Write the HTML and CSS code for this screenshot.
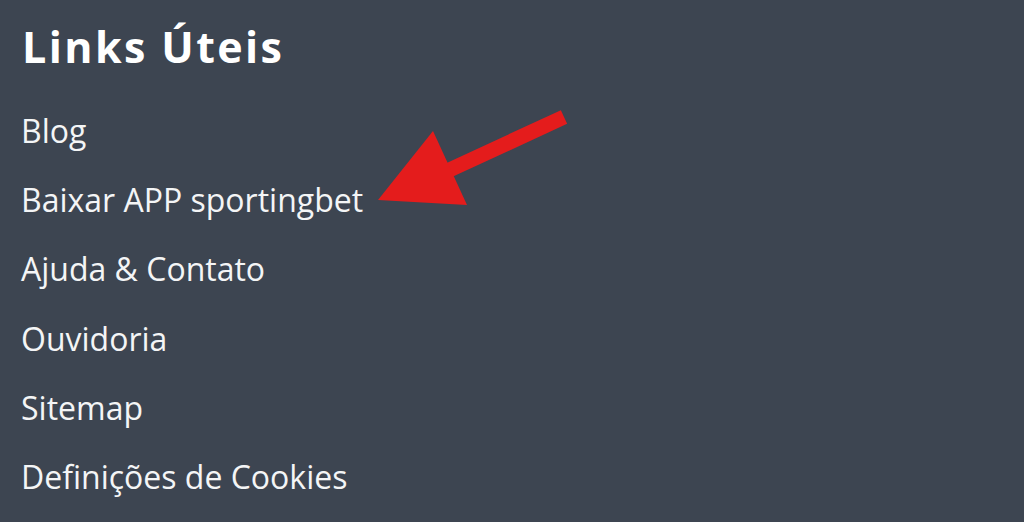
FILE: index.html
```html
<!DOCTYPE html>
<html lang="pt">

<head>
    <meta charset="UTF-8">
    <meta name="viewport" content="width=device-width, initial-scale=1.0">
    <title>Links Úteis</title>

    <link rel="stylesheet" href="styles.css">

</head>

<body>

    <section class="rodape">
        <h2 class="titulo">Links Úteis</h2>

        <ul class="links">
            <li><a href="#">Blog</a></li>
            <li><a href="#">Baixar APP sportingbet</a></li>
            <li><a href="#">Ajuda &amp; Contato</a></li>
            <li><a href="#">Ouvidoria</a></li>
            <li><a href="#">Sitemap</a></li>
            <li><a href="#">Definições de Cookies</a></li>
        </ul>

        <svg class="seta" width="220" height="120" viewBox="360 100 220 120">
            <line x1="564" y1="117" x2="445" y2="172" stroke="#e41c1c" stroke-width="15" />
            <polygon points="378,200 433,131 467,205" fill="#e41c1c" />
        </svg>
    </section>

</body>

</html>
```

FILE: styles.css
```css
body {
    margin: 0;
    background-color: #3d4551;
    font-family: "Open Sans", sans-serif;
}

.rodape {
    position: relative;
    height: 522px;
    padding: 21px 0 0 22px;
    box-sizing: border-box;
}

.titulo {
    margin: 0;
    font-size: 43px;
    font-weight: 700;
    letter-spacing: 2.4px;
    line-height: 52px;
    color: #ffffff;
}

.links {
    list-style: none;
    margin: 23px 0 0 -1px;
    padding: 0;
}

.links li {
    font-size: 32px;
    line-height: 69.2px;
}

.links a {
    color: #f4f5f6;
    text-decoration: none;
}

.seta {
    position: absolute;
    left: 360px;
    top: 100px;
}
```
